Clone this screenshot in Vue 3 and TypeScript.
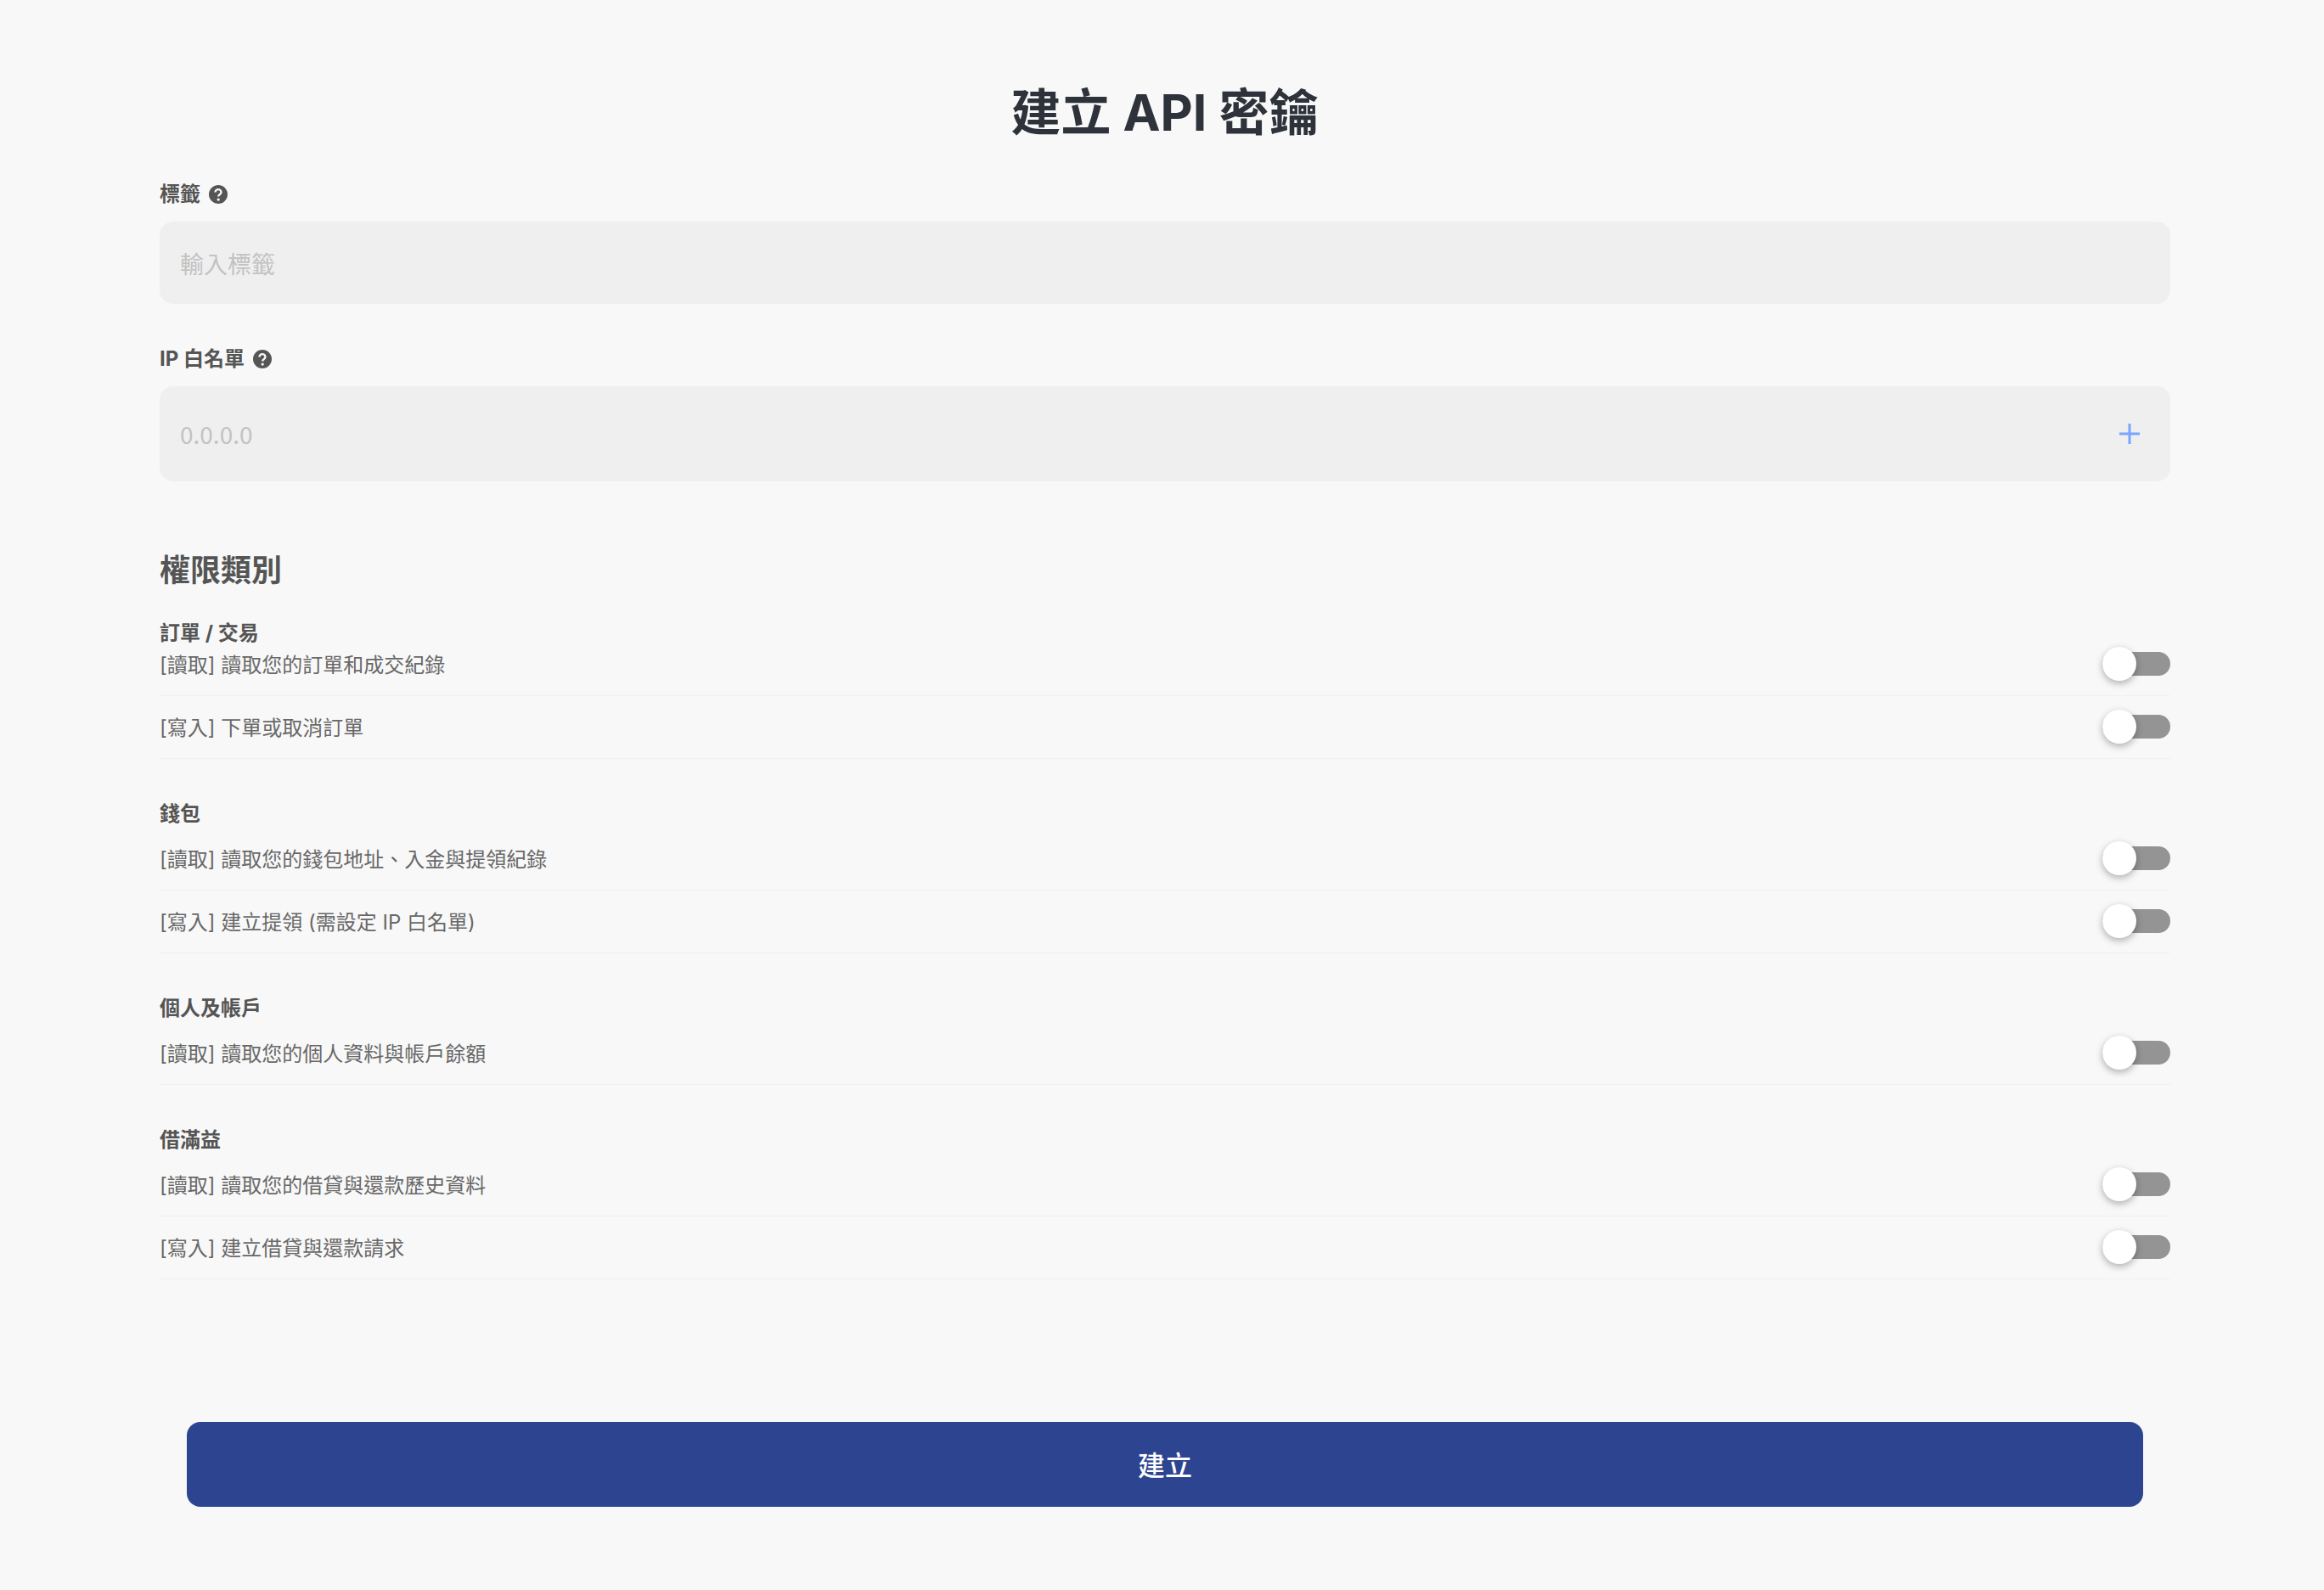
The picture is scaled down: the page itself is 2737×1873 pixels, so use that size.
<script setup lang="ts">
interface Group { title: string; perms: string[] }
const groups: Group[] = [
  { title: '訂單 / 交易', perms: ['[讀取] 讀取您的訂單和成交紀錄', '[寫入] 下單或取消訂單'] },
  { title: '錢包', perms: ['[讀取] 讀取您的錢包地址、入金與提領紀錄', '[寫入] 建立提領 (需設定 IP 白名單)'] },
  { title: '個人及帳戶', perms: ['[讀取] 讀取您的個人資料與帳戶餘額'] },
  { title: '借滿益', perms: ['[讀取] 讀取您的借貸與還款歷史資料', '[寫入] 建立借貸與還款請求'] },
]
</script>

<template>
  <div class="page">
    <h1 class="title">建立 API 密鑰</h1>

    <div class="label"><span>標籤</span>
      <svg class="help" viewBox="0 0 24 24"><circle cx="12" cy="12" r="12" fill="#555"/><path d="M8.2 9.4a3.8 3.8 0 0 1 7.6 0c0 2.6-3.6 2.7-3.6 5.4" fill="none" stroke="#f8f8f8" stroke-width="2.6"/><circle cx="12.2" cy="18.6" r="1.8" fill="#f8f8f8"/></svg>
    </div>
    <div class="field field-a"><span class="ph">輸入標籤</span></div>

    <div class="label label-ip"><span>IP 白名單</span>
      <svg class="help" viewBox="0 0 24 24"><circle cx="12" cy="12" r="12" fill="#555"/><path d="M8.2 9.4a3.8 3.8 0 0 1 7.6 0c0 2.6-3.6 2.7-3.6 5.4" fill="none" stroke="#f8f8f8" stroke-width="2.6"/><circle cx="12.2" cy="18.6" r="1.8" fill="#f8f8f8"/></svg>
    </div>
    <div class="field field-b"><span class="ph ph-ip">0.0.0.0</span>
      <svg class="plus" viewBox="0 0 24 24"><path d="M12 0v24M0 12h24" stroke="#7aa5ff" stroke-width="3" fill="none"/></svg>
    </div>

    <h2 class="section">權限類別</h2>

    <section v-for="(g, i) in groups" :key="g.title" class="group" :class="{ 'group-first': i === 0 }">
      <div class="group-title">{{ g.title }}</div>
      <div v-for="p in g.perms" :key="p" class="row">
        <span class="row-text">{{ p }}</span>
        <span class="switch"><span class="knob"></span></span>
      </div>
    </section>

    <div class="footer"><button class="submit" type="button">建立</button></div>
  </div>
</template>

<style>
html, body { margin: 0; background: #f8f8f8; }
</style>

<style scoped>
.page {
  box-sizing: border-box;
  width: 2737px;
  height: 1873px;
  padding: 0 181px 0 188px;
  background: #f8f8f8;
  font-family: "Inter", "Noto Sans CJK TC", sans-serif;
  color: #555;
}
.title {
  box-sizing: border-box;
  margin: 0;
  padding-top: 93px;
  height: 214px;
  line-height: 80px;
  text-align: center;
  font-size: 59px;
  font-weight: 700;
  color: #2e323a;
}
.label {
  display: flex;
  align-items: center;
  gap: 10px;
  height: 30px;
  line-height: 30px;
  font-size: 24px;
  font-weight: 700;
  color: #555;
}
.label-ip { margin-top: 50px; }
.help { width: 22px; height: 22px; }
.field {
  box-sizing: border-box;
  display: flex;
  align-items: center;
  justify-content: space-between;
  margin-top: 17px;
  padding: 0 36px 0 24px;
  background: #efefef;
  border-radius: 16px;
  font-size: 28px;
}
.field-a { height: 97px; }
.field-b { height: 112px; }
.ph { color: #c2c2c2; }
.ph-ip { font-family: "Noto Sans CJK TC", sans-serif; }
.plus { width: 24px; height: 24px; }
.section {
  margin: 83px 0 0;
  height: 44px;
  line-height: 44px;
  font-size: 36px;
  font-weight: 700;
  color: #555;
}
.group { margin-top: 49px; }
.group-first { margin-top: 36px; }
.group-title {
  height: 32px;
  line-height: 32px;
  font-size: 24px;
  font-weight: 700;
  color: #555;
}
.row {
  box-sizing: border-box;
  display: flex;
  align-items: center;
  justify-content: space-between;
  height: 74px;
  padding-bottom: 1px;
  border-bottom: 1px solid #f0f0f0;
  font-size: 24px;
  color: #686868;
}
.row-text { margin-bottom: 2px; }
.group-first .row:nth-child(2) {
  height: 58px;
  padding-bottom: 17px;
}
.switch {
  position: relative;
  width: 80px;
  height: 28px;
  border-radius: 14px;
  background: #949494;
}
.knob {
  position: absolute;
  left: 0;
  top: -6px;
  width: 40px;
  height: 40px;
  border-radius: 50%;
  background: #fff;
  box-shadow: 0 3px 8px rgba(0, 0, 0, .3);
}
.footer { padding: 0 32px; margin-top: 168px; }
.submit {
  display: block;
  width: 100%;
  height: 100px;
  padding: 0 0 2px;
  border: 0;
  border-radius: 16px;
  background: #2d4590;
  color: #fff;
  font: 500 32px "Inter", "Noto Sans CJK TC", sans-serif;
}
</style>
